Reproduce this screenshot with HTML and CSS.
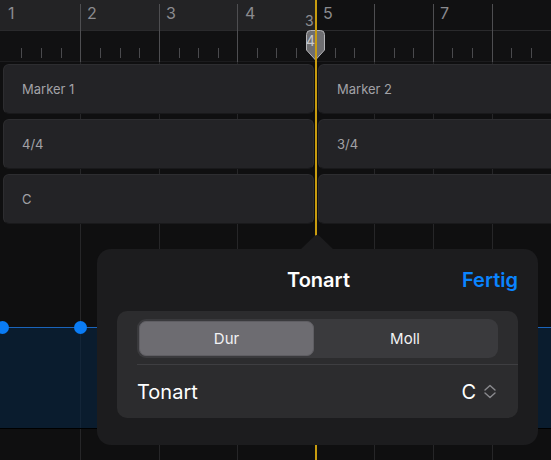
FILE: index.html
```html
<!DOCTYPE html>
<html lang="de">
<head>
<meta charset="utf-8">
<title>Tonart</title>
<link rel="stylesheet" href="styles.css">
</head>
<body>
<div class="stage">
  <div class="ruler">
    <div class="ruler-top">
      <div class="ruler-cycle"></div>
    </div>
    <span class="bar-num" style="left:8px">1</span>
    <span class="bar-num" style="left:87px">2</span>
    <span class="bar-num" style="left:166px">3</span>
    <span class="bar-num" style="left:245px">4</span>
    <span class="bar-num" style="left:323px">5</span>
    <span class="bar-num" style="left:440px">7</span>
    <span class="sig-num sig-top">3</span>
  </div>

  <div class="tracks">
    <div class="track">
      <div class="region first">Marker 1</div>
      <div class="region">Marker 2</div>
    </div>
    <div class="track">
      <div class="region first">4/4</div>
      <div class="region">3/4</div>
    </div>
    <div class="track">
      <div class="region first">C</div>
      <div class="region"></div>
    </div>
  </div>

  <div class="lane">
    <div class="automation">
      <span class="node" style="left:2px"></span>
      <span class="node" style="left:80px"></span>
    </div>
  </div>

  <svg class="grid" width="551" height="460" viewBox="0 0 551 460">
    <g stroke="#262628" stroke-width="1">
      <line x1="80.5" y1="62" x2="80.5" y2="460"/>
      <line x1="159.5" y1="62" x2="159.5" y2="460"/>
      <line x1="237.5" y1="62" x2="237.5" y2="460"/>
      <line x1="374.5" y1="62" x2="374.5" y2="460"/>
      <line x1="433.5" y1="62" x2="433.5" y2="460"/>
      <line x1="492.5" y1="62" x2="492.5" y2="460"/>
    </g>
    <g stroke="#4e4e51" stroke-width="1">
      <line x1="80.5" y1="4" x2="80.5" y2="62"/>
      <line x1="159.5" y1="4" x2="159.5" y2="62"/>
      <line x1="237.5" y1="4" x2="237.5" y2="62"/>
      <line x1="374.5" y1="4" x2="374.5" y2="62"/>
      <line x1="433.5" y1="4" x2="433.5" y2="62"/>
      <line x1="492.5" y1="4" x2="492.5" y2="62"/>
    </g>
    <g stroke="#4a4a4d" stroke-width="1">
      <line x1="21.5" y1="48" x2="21.5" y2="58"/>
      <line x1="41.5" y1="48" x2="41.5" y2="58"/>
      <line x1="61.5" y1="48" x2="61.5" y2="58"/>
      <line x1="100.5" y1="48" x2="100.5" y2="58"/>
      <line x1="120.5" y1="48" x2="120.5" y2="58"/>
      <line x1="139.5" y1="48" x2="139.5" y2="58"/>
      <line x1="179.5" y1="48" x2="179.5" y2="58"/>
      <line x1="198.5" y1="48" x2="198.5" y2="58"/>
      <line x1="218.5" y1="48" x2="218.5" y2="58"/>
      <line x1="257.5" y1="48" x2="257.5" y2="58"/>
      <line x1="276.5" y1="48" x2="276.5" y2="58"/>
      <line x1="296.5" y1="48" x2="296.5" y2="58"/>
      <line x1="335.5" y1="48" x2="335.5" y2="58"/>
      <line x1="354.5" y1="48" x2="354.5" y2="58"/>
      <line x1="394.5" y1="48" x2="394.5" y2="58"/>
      <line x1="413.5" y1="48" x2="413.5" y2="58"/>
      <line x1="452.5" y1="48" x2="452.5" y2="58"/>
      <line x1="472.5" y1="48" x2="472.5" y2="58"/>
      <line x1="511.5" y1="48" x2="511.5" y2="58"/>
      <line x1="531.5" y1="48" x2="531.5" y2="58"/>
    </g>
  </svg>

  <svg class="handle" width="22" height="33" viewBox="0 0 22 33">
    <path d="M1.5 5.5 Q1.5 1.5 5.5 1.5 H15.5 Q19.5 1.5 19.5 5.5 V21 L10.5 31 L1.5 21 Z" fill="#6e6e71" stroke="#b5b5b8" stroke-width="1"/>
  </svg>
  <span class="sig-num sig-bottom">4</span>
  <div class="playhead"></div>

  <svg class="arrow" width="34" height="16" viewBox="0 0 34 16">
    <path d="M0 16 L14.5 2 Q17 0 19.5 2 L34 16 Z" fill="#1c1c1e"/>
  </svg>
  <div class="popover">
    <div class="pop-header">
      <span></span>
      <span class="pop-title">Tonart</span>
      <span class="pop-done">Fertig</span>
    </div>
    <div class="group">
      <div class="segmented">
        <span class="seg selected">Dur</span>
        <span class="seg">Moll</span>
      </div>
      <div class="separator"></div>
      <div class="row">
        <span class="row-label">Tonart</span>
        <span class="row-value">C
          <svg class="chev" width="14" height="15" viewBox="0 0 14 15">
            <path d="M2 6 L7 1.5 L12 6 M2 9 L7 13.5 L12 9" fill="none" stroke="#8a8a8e" stroke-width="1.4" stroke-linecap="round" stroke-linejoin="round"/>
          </svg>
        </span>
      </div>
    </div>
  </div>
</div>
</body>
</html>
```
FILE: styles.css
```css
* { box-sizing: border-box; }
html, body {
  margin: 0;
  padding: 0;
  background: #0f0f10;
}
body {
  font-family: Inter, "Noto Sans", "Liberation Sans", sans-serif;
  width: 551px;
  height: 460px;
  overflow: hidden;
}
.stage {
  position: relative;
  width: 551px;
  height: 460px;
  overflow: hidden;
}
.ruler {
  position: relative;
  height: 62px;
  background: #111112;
  border-bottom: 1px solid #1c1c1e;
}
.ruler-top {
  height: 31px;
  border-bottom: 1px solid #2a2a2c;
}
.ruler-cycle {
  width: 315px;
  height: 30px;
  background: #232325;
}
.bar-num {
  position: absolute;
  top: 4px;
  font-size: 16px;
  line-height: 18px;
  color: #8b8b8f;
  z-index: 2;
}
.sig-num {
  position: absolute;
  font-size: 14px;
  line-height: 16px;
  color: #8e8e92;
  z-index: 5;
}
.sig-top { left: 305px; top: 13px; }
.sig-bottom { left: 306px; top: 33px; color: #c9c9cc; }

.tracks {
  position: relative;
  z-index: 2;
  margin-top: 2px;
  display: flex;
  flex-direction: column;
  gap: 5px;
}
.track {
  display: flex;
  gap: 4px;
  height: 50px;
  padding-left: 3px;
}
.region {
  flex: 1 0 auto;
  margin-right: -10px;
  background: #232326;
  border: 1px solid #2d2d30;
  border-bottom-color: #19191b;
  border-radius: 6px;
  display: flex;
  align-items: center;
  padding-left: 18px;
  font-size: 13px;
  color: #a2a2a6;
}
.region.first {
  flex: 0 0 311px;
  margin-right: 0;
}

.lane {
  position: relative;
  z-index: 2;
  height: 236px;
  padding-top: 103px;
}
.automation {
  position: relative;
  height: 102px;
  background: rgba(6, 36, 66, 0.6);
  border-top: 1px solid #1a64bb;
  border-bottom: 1px solid #000;
}
.node {
  position: absolute;
  top: -7px;
  width: 13px;
  height: 13px;
  margin-left: -6.5px;
  border-radius: 50%;
  background: #0a7cf5;
}

.grid {
  position: absolute;
  left: 0;
  top: 0;
  z-index: 1;
}
.handle {
  position: absolute;
  left: 305px;
  top: 29px;
  z-index: 4;
}
.playhead {
  position: absolute;
  left: 315px;
  top: 0;
  width: 2px;
  height: 460px;
  background: #c89c0f;
  z-index: 6;
}

.arrow {
  position: absolute;
  left: 300px;
  top: 234px;
  z-index: 11;
}
.popover {
  position: absolute;
  left: 97px;
  top: 249px;
  width: 441px;
  height: 196px;
  background: #1c1c1e;
  border-radius: 14px;
  z-index: 10;
  padding: 0 20px;
  display: flex;
  flex-direction: column;
}
.pop-header {
  height: 62px;
  display: grid;
  grid-template-columns: 1fr auto 1fr;
  align-items: center;
}
.pop-title {
  font-size: 20px;
  font-weight: 600;
  color: #ffffff;
  padding-left: 2px;
}
.pop-done {
  justify-self: end;
  font-size: 20px;
  font-weight: 600;
  color: #0a84ff;
}
.group {
  background: #2c2c2e;
  border-radius: 10px;
  padding: 8px 0 0 20px;
  height: 107px;
}
.segmented {
  margin-right: 20px;
  height: 39px;
  background: #3a3a3d;
  border-radius: 9px;
  padding: 2px;
  display: grid;
  grid-template-columns: 175px 1fr;
}
.seg {
  display: flex;
  align-items: center;
  justify-content: center;
  font-size: 15px;
  font-weight: 400;
  color: #f2f2f4;
  border-radius: 7px;
}
.seg.selected {
  background: #6d6c71;
  border: 1px solid #5f5e63;
}
.separator {
  margin-top: 6px;
  height: 1px;
  background: #3e3e41;
}
.row {
  height: 53px;
  display: flex;
  align-items: center;
  justify-content: space-between;
  padding-right: 21px;
}
.row-label {
  font-size: 20px;
  color: #ffffff;
}
.row-value {
  display: flex;
  align-items: center;
  gap: 7px;
  font-size: 20px;
  color: #ffffff;
}
.chev { display: block; }
```
